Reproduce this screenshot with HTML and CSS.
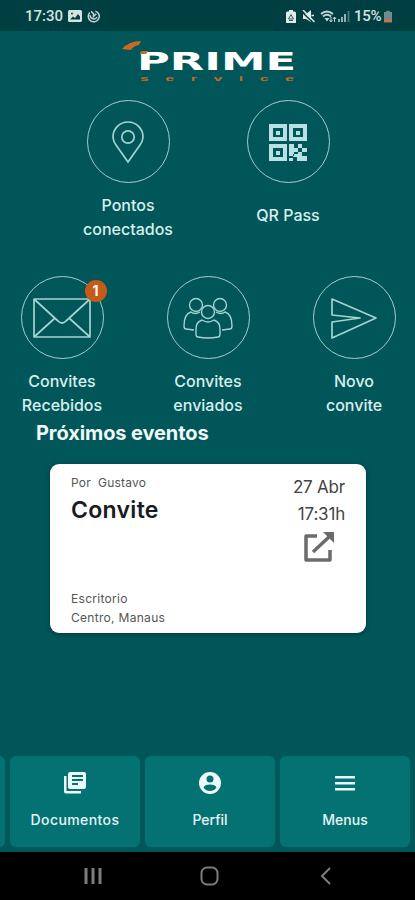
FILE: index.html
```html
<!DOCTYPE html>
<html lang="pt-BR">
  <head>
    <title>Prime Service</title>
    <meta charset="utf-8"/>
    <meta name="viewport" content="width=device-width, initial-scale=1">
    <link rel="stylesheet" href="styles.css">
  </head>
  <body>
    <header class="status">
      <span class="clock">17:30</span>
      <svg class="photo" width="14" height="12" viewBox="0 0 14 12"><rect width="14" height="12" rx="1.500" fill="#d5e2e2"/><path d="M2 9.500l3-3 2 1.500 3-4 2 2.500v3z" fill="#003f41"/><circle cx="4" cy="3.500" r="1" fill="#003f41"/></svg>
      <svg width="13" height="13" viewBox="0 0 14 14" fill="none" stroke="#c4d5d5" stroke-width="1.600"><path d="M9 1.200A5.900 5.900 0 1 1 3 2.800M3.500 5.500a3.800 3.800 0 0 0 7.200 2M4.500 1.500L7 4v3l3-3"/></svg>
      <div class="status-right">
        <svg width="10" height="13" viewBox="0 0 10 13"><path d="M3 0h4v1.500h1.500Q10 1.500 10 3v10H0V3q0-1.500 1.500-1.500H3z" fill="#e2eaea"/><path d="M5 4.500l2.500 4.500h-5zM3 10.500h4" fill="none" stroke="#315f60"/></svg>
        <svg class="mute" width="13" height="13" viewBox="0 0 13 13"><path d="M1 4h3l5-4v12L4 9H1z" fill="#e2eaea"/><path d="M0 2l12 11.500" stroke="#003f41" stroke-width="1.500"/><path d="M1 0l11.500 12M9.500 5.500H12" stroke="#e2eaea" stroke-width="1.500"/></svg>
        <svg class="wifi" width="17" height="13" viewBox="0 0 17 13" fill="none"><path d="M1 4q6-5 12 0M3 6.500q4-3.500 8 0" stroke="#c4d5d5" stroke-width="2"/><path d="M4.500 8h5L7 11.500z" fill="#c4d5d5"/><path d="M11 7v5M9.500 10l1.500 2 1.500-2M14.500 12V7M13 9l1.500-2L16 9" stroke="#c4d5d5"/></svg>
        <svg class="signal" width="12" height="12" viewBox="0 0 12 12"><path d="M1 12V9M4 12V7M7 12V4" stroke="#b2c6c6" stroke-width="1.700"/><path d="M10.500 12V1" stroke="#527d7e" stroke-width="1.700"/></svg>
        <span class="percent">15%</span>
        <svg class="battery" width="8" height="13" viewBox="0 0 9 13"><path d="M2.500 0h4v1.500H9V13H0V1.500h2.500z" fill="#6f8c8c"/><path d="M0 10h9v3H0z" fill="#d2714c"/></svg>
      </div>
    </header>

    <main>
      <svg class="logo" width="176" height="44" viewBox="0 0 176 44" role="img" aria-label="Prime Service">
        <path d="M1 9Q8 1 20 1l-2 4q-6 1-8 5z" fill="#c96a23"/>
        <text class="prime" x="16" y="30" textLength="159" lengthAdjust="spacingAndGlyphs">PRIME</text>
        <path d="M19 14q0-3 3-3h5l-2 3z" fill="#c96a23"/>
        <g class="service"><text transform="translate(19 41) scale(2 1)" textLength="77">service</text></g>
      </svg>

      <nav class="shortcuts top">
        <a class="shortcut">
          <span class="ring"><svg width="82" height="82" viewBox="0 0 82 82"><path d="M41 61L29 44q-3-4-3-8a15 15 0 0 1 30 0q0 4-3 8z"/><circle cx="41" cy="36" r="6.200"/></svg></span>
          <span class="label">Pontos<br>conectados</span>
        </a>
        <a class="shortcut">
          <span class="ring"><svg class="qr" width="82" height="82" viewBox="0 0 82 82"><path fill-rule="evenodd" d="M22 23h18v17H22zM26 27v9h10v-9zM29 30h4v4h-4zM42 23h18v17H42zM46 27v9h10v-9zM49 30h4v4h-4zM22 43h18v17H22zM26 47v9h10v-9zM29 50h4v4h-4zM42 43h5v4h4v4h-4v4h-5zM51 43h4v4h-4zM55 47h5v4h-5zM51 51h4v4h5v5H50v-4h-4v-3h5zM42 57h4v3h-4z"/></svg></span>
          <span class="label single">QR Pass</span>
        </a>
      </nav>

      <nav class="shortcuts">
        <a class="shortcut">
          <span class="ring"><svg width="82" height="82" viewBox="0 0 82 82"><path d="M13 22h56v38H13zM13 22l24 22q4 4 8 0l24-22M13 60l21-19M69 60L48 41"/></svg><b class="badge">1</b></span>
          <span class="label">Convites<br>Recebidos</span>
        </a>
        <a class="shortcut">
          <span class="ring"><svg class="people" width="82" height="82" viewBox="0 0 82 82"><circle cx="29" cy="28" r="6.500"/><circle cx="53" cy="28" r="6.500"/><circle cx="41" cy="35" r="6.500"/><path d="M31 60q-2 0-2-3v-5q0-7 6-9 6 4 12 0 6 2 6 9v5q0 3-2 3-10 2-20 0zM27 53l-8-1q-2 0-2-3 0-12 7-14 4 3 9 0M55 53l8-1q2 0 2-3 0-12-7-14-4 3-9 0"/></svg></span>
          <span class="label">Convites<br>enviados</span>
        </a>
        <a class="shortcut">
          <span class="ring"><svg width="82" height="82" viewBox="0 0 82 82"><path d="M19 22l44 19-44 20V45l28-4-28-3z"/></svg></span>
          <span class="label">Novo<br>convite</span>
        </a>
      </nav>

      <h1>Próximos eventos</h1>
      <article class="event">
        <div class="event-info">
          <span class="author">Por&nbsp; Gustavo</span>
          <h2>Convite</h2>
          <p>Escritorio<br>Centro, Manaus</p>
        </div>
        <div class="event-side">
          <span class="date">27 Abr</span>
          <span class="hour">17:31h</span>
          <svg width="32" height="32" viewBox="0 0 32 32"><path d="M14 5H3v24h24V19M10 21L27 5" fill="none" stroke="#6b6b6b" stroke-width="3.500" stroke-linejoin="round"/><path d="M20 1h11v11z" fill="#6b6b6b"/></svg>
        </div>
      </article>
    </main>

    <nav class="tabs">
      <a class="tab"></a>
      <a class="tab">
        <svg width="24" height="24" viewBox="0 0 24 24"><path fill-rule="evenodd" d="M7 1h14q2 0 2 2v13q0 2-2 2H7q-2 0-2-2V3q0-2 2-2zM9 4v2h11V4zM9 8v2h11V8zM9 12v2h6v-2zM1 5h2.500v15H18v2.500H3q-2 0-2-2z"/></svg>
        <span class="wide">Documentos</span>
      </a>
      <a class="tab">
        <svg width="24" height="24" viewBox="0 0 24 24"><path fill-rule="evenodd" d="M12 1a11 11 0 1 0 0 22 11 11 0 0 0 0-22zM12 4.500a3.500 3.500 0 1 1 0 7 3.500 3.500 0 0 1 0-7zM5.500 16.500q1-3 6.500-3t6.500 3Q16 20 12 20t-6.500-3.500z"/></svg>
        <span>Perfil</span>
      </a>
      <a class="tab">
        <svg width="24" height="24" viewBox="0 0 24 24"><path d="M2 5h20v2.500H2zM2 11h20v2.500H2zM2 17h20v2.500H2z"/></svg>
        <span>Menus</span>
      </a>
    </nav>

    <footer class="system">
      <svg class="recents" width="18" height="18" viewBox="0 0 18 18"><path d="M2 1v16M9 1v16M16 1v16"/></svg>
      <svg width="20" height="20" viewBox="0 0 20 20"><rect x="1.500" y="1.500" width="16" height="17" rx="5.500"/></svg>
      <svg width="18" height="18" viewBox="0 0 18 18"><path d="M12 1L4 9l8 8"/></svg>
    </footer>
  </body>
</html>
```
FILE: styles.css
```css
* { box-sizing: border-box; }
body {
  margin: 0;
  height: 900px;
  display: flex;
  flex-direction: column;
  overflow: hidden;
  background: #005659;
  color: #d9eeee;
  font-family: Inter, "Liberation Sans", sans-serif;
}
svg { display: block; flex: none; }

/* status bar */
.status {
  height: 31px;
  padding: 1px 23px 0 25px;
  display: flex;
  align-items: center;
  background: #003f41;
  color: #d5e2e2;
  font: 500 15px Roboto, sans-serif;
}
.clock { width: 37px; }
.photo { margin: 0 5px 0 6px; }
.status-right { margin-left: auto; display: flex; align-items: center; }
.mute { margin-left: 6px; }
.wifi { margin-left: 5px; }
.signal { margin-left: 1px; }
.percent { width: 28px; margin-left: 4px; letter-spacing: -.3px; }
.battery { margin-left: 2px; }

main { flex: 1; }
.logo { margin: 9px 0 0 121px; }
.prime { font: bold 25px "DejaVu Sans", sans-serif; fill: #fff; }
.service { font: bold 8px "Liberation Sans", sans-serif; fill: #c96a23; }

/* round shortcuts */
.shortcuts { display: flex; justify-content: space-between; padding: 0 19px 0 20px; }
.shortcuts.top { padding: 16px 65px 0 66px; height: 192px; }
.shortcut { width: 84px; display: flex; flex-direction: column; align-items: center; }
.top .shortcut { width: 124px; }
.ring {
  position: relative;
  width: 83px;
  height: 83px;
  border: 1px solid #a5cdcd;
  border-radius: 50%;
}
.ring svg { margin-left: -1px; fill: none; stroke: #a5d2d2; stroke-width: 1.7; stroke-linejoin: round; }
.ring .people { stroke-width: 1.4; }
.ring .qr { fill: #b9e0e2; stroke: none; }
.label {
  margin-top: 10px;
  text-align: center;
  white-space: nowrap;
  font-size: 16px;
  font-weight: 500;
  line-height: 24px;
}
.single { margin-top: 20px; }
.badge {
  position: absolute;
  top: 3px;
  right: -4px;
  width: 22px;
  height: 22px;
  border-radius: 50%;
  background: #c65a18;
  color: #fff;
  text-align: center;
  font-size: 14px;
  line-height: 22px;
}

h1 { margin: 3px 0 0 36px; color: #f0f8f8; font-size: 20px; line-height: 26px; letter-spacing: -.1px; }
.event {
  width: 316px;
  height: 169px;
  margin: 18px 0 0 50px;
  padding: 10px 21px;
  display: flex;
  justify-content: space-between;
  border-radius: 9px;
  background: #fff;
  box-shadow: 0 1px 4px #00383a;
  color: #555;
}
.event-info { display: flex; flex-direction: column; }
.author { font-size: 12px; line-height: 18px; letter-spacing: .2px; }
h2 { margin: 4px 0 0; color: #171b24; font-size: 23px; font-weight: 600; line-height: 28px; letter-spacing: .3px; }
.event p { margin: auto 0 -4px; font-size: 12px; line-height: 19px; letter-spacing: .3px; }
.event-side { display: flex; flex-direction: column; align-items: flex-end; font-size: 17px; line-height: 27px; letter-spacing: -.2px; color: #444; }
.event-side svg { margin: 3px 10px 0 0; }

/* bottom bars */
.tabs {
  height: 97px;
  padding-top: 1px;
  margin-left: -125px;
  display: flex;
  gap: 5px;
}
.tab {
  width: 130px;
  height: 91px;
  padding-top: 15px;
  flex: none;
  display: flex;
  flex-direction: column;
  align-items: center;
  border-radius: 6px;
  background: #047273;
  box-shadow: 0 0 3px #006063;
  color: #e2f6f6;
  font-size: 14px;
  font-weight: 500;
}
.tab svg { fill: #ecfbfb; }
.tab span { margin-top: 16px; line-height: 18px; }
.tab .wide { letter-spacing: .4px; }
.system {
  height: 48px;
  display: flex;
  align-items: center;
  padding-left: 84px;
  gap: 98px;
  background: #000;
}
.system svg { fill: none; stroke: #7d7d7d; stroke-width: 2; }
.system .recents { stroke-width: 3; }
```
